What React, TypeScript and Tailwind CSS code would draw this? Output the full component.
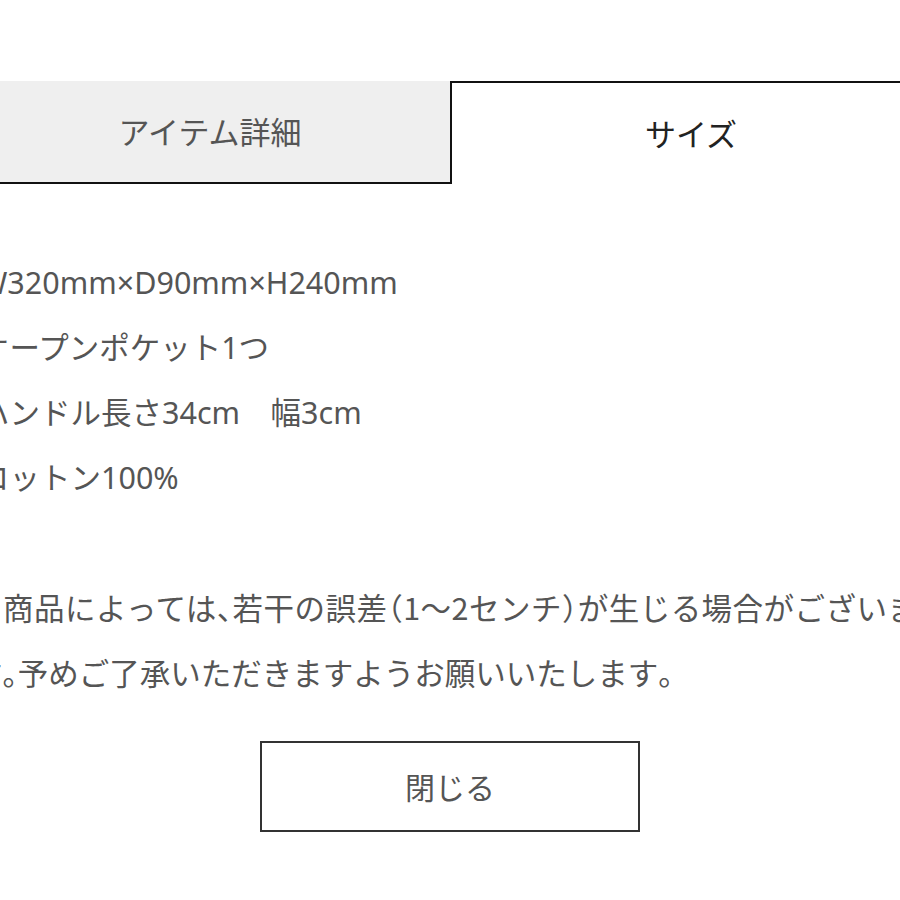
import React from "react";

const cjk = { fontFamily: '"Noto Sans CJK JP", "Noto Sans", sans-serif' };
const latin = { fontFamily: '"Noto Sans", "Noto Sans CJK JP", sans-serif' };

function H({ children }: { children: React.ReactNode }) {
  return <span className="[font-feature-settings:'halt']">{children}</span>;
}

export default function App() {
  return (
    <div
      className="w-[900px] h-[900px] overflow-hidden bg-white text-[#555]"
      style={cjk}
    >
      <div className="w-[960px] ml-[-30px] pt-[81px]">
        <div className="grid grid-cols-2 h-[103px]">
          <div className="bg-[#efefef] border-b-2 border-[#111] flex items-center justify-center text-[31px] text-[#555]">
            アイテム詳細
          </div>
          <div className="bg-white border-t-2 border-l-2 border-[#111] flex items-center justify-center text-[31px] text-[#222]">
            サイズ
          </div>
        </div>
        <div className="pl-[2px] pt-[66px] leading-[65px]">
          <div className="pl-[7px] text-[30.5px]" style={latin}>
            <p className="whitespace-nowrap">W320mm×D90mm×H240mm</p>
            <p className="whitespace-nowrap">オープンポケット1つ</p>
            <p className="whitespace-nowrap">ハンドル長さ34cm　幅3cm</p>
            <p className="whitespace-nowrap">コットン100%</p>
            <p className="h-[65px]"></p>
          </div>
          <div className="text-[30.5px]">
            <p className="w-[946px] text-justify [text-align-last:justify]">
              ※商品によっては<H>、</H>若干の誤差<H>（</H>1〜2センチ<H>）</H>が生じる場合がございま
            </p>
            <p className="whitespace-nowrap">
              す<H>。</H>予めご了承いただきますようお願いいたします<H>。</H>
            </p>
          </div>
        </div>
        <div className="flex justify-center pt-[36px]">
          <div className="w-[380px] h-[91px] border-2 border-[#333] flex items-center justify-center text-[30px] text-[#555]">
            閉じる
          </div>
        </div>
      </div>
    </div>
  );
}
